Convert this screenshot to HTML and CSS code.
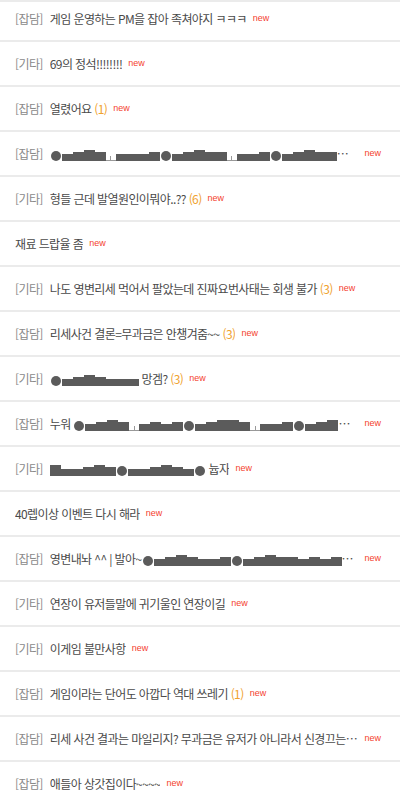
FILE: index.html
```html
<!DOCTYPE html>
<html lang="ko">
<head>
<meta charset="utf-8">
<link rel="stylesheet" href="styles.css">
</head>
<body>
<ul class="list">
  <li class="row first"><span class="cat">[잡담]</span><span class="title">게임 운영하는 PM을 잡아 족쳐야지 ㅋㅋㅋ</span><span class="new">new</span></li>
  <li class="row"><span class="cat">[기타]</span><span class="title">69의 정석!!!!!!!!</span><span class="new">new</span></li>
  <li class="row"><span class="cat">[잡담]</span><span class="title">열렸어요 <span class="cnt">(1)</span></span><span class="new">new</span></li>
  <li class="row"><span class="cat">[잡담]</span><span class="title"><span class="g c"></span><span class="g h1"></span><span class="g h2"></span><span class="g h3"></span><span class="g h2"></span><span class="g t"></span><span class="g h1"></span><span class="g h1"></span><span class="g h1"></span><span class="g h2"></span><span class="g c"></span><span class="g h1"></span><span class="g h2"></span><span class="g h3"></span><span class="g h2"></span><span class="g h2"></span><span class="g t"></span><span class="g h1"></span><span class="g h1"></span><span class="g h2"></span><span class="g c"></span><span class="g h1"></span><span class="g h2"></span><span class="g h3"></span><span class="g h2"></span><span class="g h2"></span><span class="g h1"></span><span class="g h2"></span><span class="g h3"></span></span><span class="new">new</span></li>
  <li class="row"><span class="cat">[기타]</span><span class="title">형들 근데 발열원인이뭐야..?? <span class="cnt">(6)</span></span><span class="new">new</span></li>
  <li class="row"><span class="title">재료 드랍율 좀</span><span class="new">new</span></li>
  <li class="row"><span class="cat">[기타]</span><span class="title">나도 영변리세 먹어서 팔았는데 진짜요번사태는 회생 불가 <span class="cnt">(3)</span></span><span class="new">new</span></li>
  <li class="row"><span class="cat">[잡담]</span><span class="title">리세사건 결론=무과금은 안챙겨줌~~ <span class="cnt">(3)</span></span><span class="new">new</span></li>
  <li class="row"><span class="cat">[기타]</span><span class="title"><span class="g c"></span><span class="g h1"></span><span class="g h2"></span><span class="g h3"></span><span class="g h2"></span><span class="g h1"></span><span class="g h1"></span><span class="g h1"></span> 망겜? <span class="cnt">(3)</span></span><span class="new">new</span></li>
  <li class="row"><span class="cat">[잡담]</span><span class="title">누워 <span class="g c"></span><span class="g h1"></span><span class="g h2"></span><span class="g h3"></span><span class="g h2"></span><span class="g t"></span><span class="g h1"></span><span class="g h2"></span><span class="g h1"></span><span class="g h2"></span><span class="g c"></span><span class="g h1"></span><span class="g h2"></span><span class="g h3"></span><span class="g h3"></span><span class="g h2"></span><span class="g t"></span><span class="g h1"></span><span class="g h1"></span><span class="g h2"></span><span class="g c"></span><span class="g h1"></span><span class="g h2"></span><span class="g h3"></span><span class="g h2"></span><span class="g h2"></span><span class="g h1"></span></span><span class="new">new</span></li>
  <li class="row"><span class="cat">[기타]</span><span class="title"><span class="g h3"></span><span class="g h1"></span><span class="g h1"></span><span class="g h2"></span><span class="g h3"></span><span class="g h2"></span><span class="g c"></span><span class="g h1"></span><span class="g h1"></span><span class="g h2"></span><span class="g h3"></span><span class="g h2"></span><span class="g h1"></span><span class="g c"></span> 늅자</span><span class="new">new</span></li>
  <li class="row"><span class="title">40렙이상 이벤트 다시 해라</span><span class="new">new</span></li>
  <li class="row"><span class="cat">[잡담]</span><span class="title">영변내놔 ^^ | 발아~<span class="g c"></span><span class="g h1"></span><span class="g h2"></span><span class="g h3"></span><span class="g h2"></span><span class="g h1"></span><span class="g h1"></span><span class="g h2"></span><span class="g c"></span><span class="g h1"></span><span class="g h2"></span><span class="g h3"></span><span class="g h2"></span><span class="g h2"></span><span class="g h1"></span><span class="g h2"></span><span class="g h1"></span><span class="g h2"></span><span class="g c"></span><span class="g h1"></span></span><span class="new">new</span></li>
  <li class="row"><span class="cat">[기타]</span><span class="title">연장이 유저들말에 귀기울인 연장이길</span><span class="new">new</span></li>
  <li class="row"><span class="cat">[기타]</span><span class="title">이게임 불만사항</span><span class="new">new</span></li>
  <li class="row"><span class="cat">[잡담]</span><span class="title">게임이라는 단어도 아깝다 역대 쓰레기 <span class="cnt">(1)</span></span><span class="new">new</span></li>
  <li class="row"><span class="cat">[잡담]</span><span class="title">리세 사건 결과는 마일리지? 무과금은 유저가 아니라서 신경끄는 게임인듯</span><span class="new">new</span></li>
  <li class="row"><span class="cat">[잡담]</span><span class="title">애들아 상갓집이다~~~~</span><span class="new">new</span></li>
</ul>
</body>
</html>
```
FILE: styles.css
```css
html, body {
  margin: 0;
  padding: 0;
  background: #fff;
}
body {
  font-family: "Noto Sans CJK KR", "Noto Sans", sans-serif;
  font-size: 12px;
  letter-spacing: -0.6px;
  color: #4a4a4a;
  overflow: hidden;
}
.list {
  list-style: none;
  margin: 0;
  padding: 0;
  border-top: 2px solid #ebebeb;
}
.row {
  display: flex;
  align-items: center;
  box-sizing: border-box;
  height: 45px;
  padding: 0 19px 0 15px;
  border-bottom: 2px solid #ebebeb;
  white-space: nowrap;
}
.row.first {
  height: 40px;
  padding-bottom: 5px;
}
.cat {
  color: #8a8a8a;
  flex: none;
  margin-right: 7px;
}
.title {
  overflow: hidden;
  text-overflow: ellipsis;
  min-width: 0;
  flex: 0 1 auto;
}
.cnt {
  color: #f0a22e;
}
.new {
  flex: none;
  color: #f4412e;
  font-family: "Liberation Sans", Arial, sans-serif;
  font-size: 9px;
  letter-spacing: 0;
  margin-left: 6px;
  position: relative;
  top: -1px;
}
.g {
  display: inline-block;
  width: 11px;
  background: #5b5b5b;
  vertical-align: -2px;
  letter-spacing: 0;
}
.h1 { height: 7px; }
.h2 { height: 9px; }
.h3 { height: 11px; }
.c {
  width: 10px;
  height: 10px;
  border-radius: 50%;
  margin: 0 1px;
}
.t {
  width: 10px;
  height: 5px;
  background: linear-gradient(#999, #999) center bottom / 1px 5px no-repeat;
  border-bottom: 1px solid #999;
  box-sizing: border-box;
}
```
